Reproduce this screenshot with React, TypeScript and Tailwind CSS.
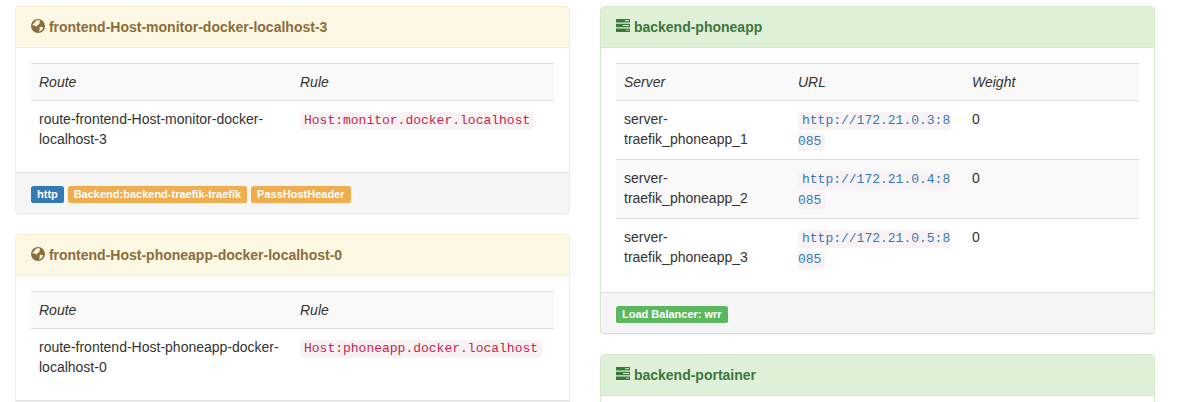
import type { ReactNode } from "react";

function GlobeIcon() {
  return (
    <svg viewBox="0 0 14 14" className="inline-block size-[14px] relative top-px align-baseline" aria-hidden="true">
      <path
        fill="currentColor"
        fillRule="evenodd"
        d="M7 0a7 7 0 1 1 0 14A7 7 0 0 1 7 0zM6.3 1.2 4.4 1.9 4.8 2.8 3.4 3.3 3 4.6 1.7 5.3 1.6 6.6 3 6.2 4.3 6.8 5.6 7.6 6.5 7.1 6.2 6.2 7.7 5.4 9 4 8.3 3.2 9.3 2.2 8.4 1.3zM8.6 8.3l2-.5 1.6.6-.7 1.8-1.7 1.6-1.7.9.5-1.8z"
      />
    </svg>
  );
}

function TasksIcon() {
  return (
    <svg viewBox="0 0 14 14" className="inline-block size-[14px] relative top-px align-baseline" aria-hidden="true">
      <path
        fill="currentColor"
        fillRule="evenodd"
        d="M.4 0h13.2q.4 0 .4.4v2.7q0 .4-.4.4H.4q-.4 0-.4-.4V.4Q0 0 .4 0zM9 1.3v.9h4v-.9zM.4 4.7h13.2q.4 0 .4.4v2.7q0 .4-.4.4H.4q-.4 0-.4-.4V5.1q0-.4.4-.4zM7 6v.9h6V6zM.4 9.4h13.2q.4 0 .4.4v2.8q0 .4-.4.4H.4q-.4 0-.4-.4V9.8q0-.4.4-.4zM10 10.7v.9h3v-.9z"
      />
    </svg>
  );
}

const tones = {
  frontend: { panel: "border-[#faebcc]", heading: "border-[#faebcc] bg-[#fcf8e3] text-[#8a6d3b]", column: "w-[261px]" },
  backend: { panel: "border-[#d6e9c6]", heading: "border-[#d6e9c6] bg-[#dff0d8] text-[#3c763d]", column: "w-[174px]" },
};

function Panel({ tone, title, columns, rows, footer }: {
  tone: keyof typeof tones;
  title: string;
  columns: string[];
  rows: ReactNode[][];
  footer?: ReactNode;
}) {
  return (
    <section className={`mb-5 rounded-[4px] border bg-white shadow-[0_1px_1px_rgba(0,0,0,0.05)] ${tones[tone].panel}`}>
      <div className={`rounded-t-[3px] border-b px-[15px] py-[10px] ${tones[tone].heading}`}>
        {tone === "frontend" ? <GlobeIcon /> : <TasksIcon />} <strong className="font-bold">{title}</strong>
      </div>
      <div className="p-[15px]">
        <table className="w-full table-fixed border-separate border-spacing-0">
          <tbody>
            {columns.length > 0 && (
              <tr className="bg-[#f9f9f9]">
                {columns.map((c, i) => (
                  <td key={c} className={`border-t border-[#ddd] p-2 align-top italic ${i < columns.length - 1 ? tones[tone].column : ""}`}>{c}</td>
                ))}
              </tr>
            )}
            {rows.map((cells, i) => (
              <tr key={i} className="even:bg-white odd:bg-[#f9f9f9]">
                {cells.map((cell, j) => (
                  <td key={j} className="border-t border-[#ddd] p-2 align-top">{cell}</td>
                ))}
              </tr>
            ))}
          </tbody>
        </table>
      </div>
      <div className="min-h-[41px] rounded-b-[3px] border-t border-[#ddd] bg-[#f5f5f5] px-[15px] py-[10px]">{footer}</div>
    </section>
  );
}

function Code({ children }: { children: ReactNode }) {
  return (
    <code className="rounded-[4px] bg-[#f9f2f4] px-1 pt-px pb-0.5 font-['Liberation_Mono',monospace] text-[13px] leading-[18px] text-[#c7254e]">
      {children}
    </code>
  );
}

function Label({ color, children }: { color: string; children: ReactNode }) {
  return (
    <span className={`inline rounded-[2.6px] px-[6px] pt-[2.1px] pb-[3.1px] align-baseline text-[11px] leading-none font-bold text-white ${color}`}>
      {children}
    </span>
  );
}

const frontends = [
  { name: "frontend-Host-monitor-docker-localhost-3", rule: "Host:monitor.docker.localhost", backend: "backend-traefik-traefik" },
  { name: "frontend-Host-phoneapp-docker-localhost-0", rule: "Host:phoneapp.docker.localhost" },
];

const backends = [
  {
    name: "backend-phoneapp",
    balancer: "wrr",
    columns: ["Server", "URL", "Weight"],
    servers: [
      { name: "server-traefik_phoneapp_1", url: "http://172.21.0.3:8085" },
      { name: "server-traefik_phoneapp_2", url: "http://172.21.0.4:8085" },
      { name: "server-traefik_phoneapp_3", url: "http://172.21.0.5:8085" },
    ],
  },
  { name: "backend-portainer", columns: [], servers: [] },
];

export default function App() {
  return (
    <main className="h-[402px] overflow-hidden bg-white font-['Liberation_Sans',Arial,sans-serif] text-[14px] leading-[20px] text-[#333]">
      <div className="grid w-[1170px] grid-cols-2 gap-[30px] px-[15px] pt-[6px]">
        <div>
          {frontends.map((f) => (
            <Panel
              key={f.name}
              tone="frontend"
              title={f.name}
              columns={["Route", "Rule"]}
              rows={[[`route-${f.name}`, <Code>{f.rule}</Code>]]}
              footer={
                f.backend && (
                  <>
                    <Label color="bg-[#337ab7]">http</Label> <Label color="bg-[#f0ad4e]">Backend:{f.backend}</Label>{" "}
                    <Label color="bg-[#f0ad4e]">PassHostHeader</Label>
                  </>
                )
              }
            />
          ))}
        </div>
        <div>
          {backends.map((b) => (
            <Panel
              key={b.name}
              tone="backend"
              title={b.name}
              columns={b.columns}
              rows={b.servers.map((s) => [
                s.name,
                <Code>
                  <a href={s.url} className="break-all text-[#337ab7]">{s.url}</a>
                </Code>,
                "0",
              ])}
              footer={b.balancer && <Label color="bg-[#5cb85c]">Load Balancer: {b.balancer}</Label>}
            />
          ))}
        </div>
      </div>
    </main>
  );
}
